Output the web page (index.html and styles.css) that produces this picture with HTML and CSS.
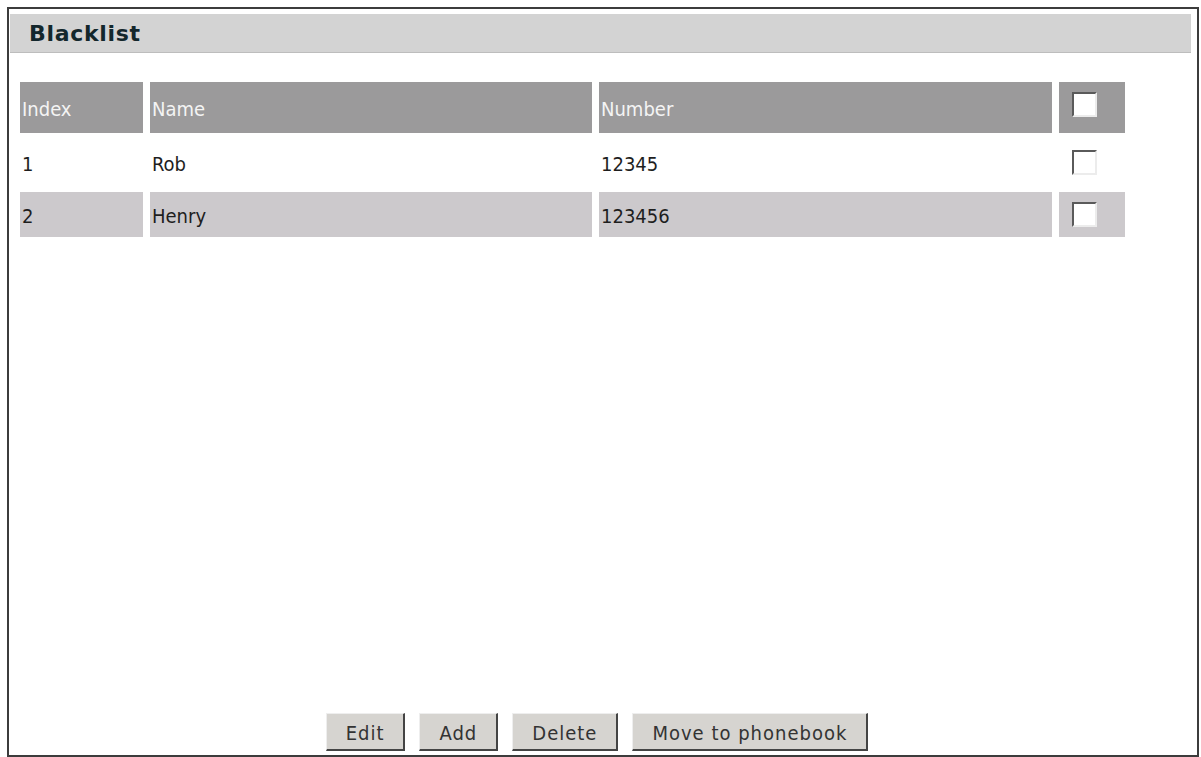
FILE: index.html
```html
<!DOCTYPE html>
<html lang="en">
<head>
<meta charset="utf-8">
<title>Blacklist</title>
<link rel="stylesheet" href="styles.css">
</head>
<body>
<div class="frame">
  <div class="titlebar"><span class="title">Blacklist</span></div>
  <div class="table">
    <div class="cell head">Index</div>
    <div class="cell head">Name</div>
    <div class="cell head">Number</div>
    <div class="cell head check"><input type="checkbox" class="box" aria-label="Select all"></div>

    <div class="cell">1</div>
    <div class="cell">Rob</div>
    <div class="cell">12345</div>
    <div class="cell check"><input type="checkbox" class="box" aria-label="Select Rob"></div>

    <div class="cell alt">2</div>
    <div class="cell alt">Henry</div>
    <div class="cell alt">123456</div>
    <div class="cell alt check"><input type="checkbox" class="box" aria-label="Select Henry"></div>
  </div>
  <div class="spacer"></div>
  <div class="buttons">
    <button class="btn">Edit</button>
    <button class="btn">Add</button>
    <button class="btn">Delete</button>
    <button class="btn">Move to phonebook</button>
  </div>
</div>
</body>
</html>
```

FILE: styles.css
```css
html, body {
  margin: 0;
  padding: 0;
  background: #ffffff;
}

body {
  padding: 7px 2px 0 7px;
  font-family: "DejaVu Sans Condensed", "DejaVu Sans", sans-serif;
  font-size: 20px;
  color: #1e1e1e;
}

.frame {
  box-sizing: border-box;
  height: 750px;
  border: 2px solid #3c3c3c;
  background: #ffffff;
  display: flex;
  flex-direction: column;
}

.titlebar {
  margin: 5px 6px 0 1px;
  height: 38px;
  background: #d3d3d3;
  border-bottom: 1px solid #bdbdbd;
  display: flex;
  align-items: center;
  padding-left: 19px;
}

.title {
  font-family: "DejaVu Sans", sans-serif;
  font-weight: bold;
  font-size: 22px;
  letter-spacing: 0.7px;
  color: #13272c;
  padding-top: 1px;
}

.table {
  margin: 29px 0 0 11px;
  display: grid;
  grid-template-columns: 123px 442px 453px 66px;
  grid-template-rows: 51px 45px 45px;
  gap: 7px;
}

.cell {
  display: flex;
  align-items: center;
  padding-left: 2px;
  padding-top: 3px;
  box-sizing: border-box;
}

.head {
  background: #9b9a9b;
  color: #f4f4f4;
}

.alt {
  background: #ccc9cc;
}

.check {
  padding-left: 13px;
  padding-top: 0;
}

.head.check {
  padding-bottom: 7px;
}

.box {
  appearance: none;
  -webkit-appearance: none;
  margin: 0;
  width: 25px;
  height: 25px;
  box-sizing: border-box;
  background: #ffffff;
  border-top: 2px solid #5a5a5a;
  border-left: 2px solid #5a5a5a;
  border-bottom: 2px solid #ececec;
  border-right: 2px solid #ececec;
}

.spacer {
  flex: 1;
}

.buttons {
  display: flex;
  justify-content: center;
  gap: 14px;
  padding-right: 12px;
  margin-bottom: 4px;
}

.btn {
  font-family: "DejaVu Sans Condensed", "DejaVu Sans", sans-serif;
  font-size: 20px;
  letter-spacing: 1px;
  color: #333333;
  background: #d6d4d0;
  height: 38px;
  padding: 2px 19px 0 19px;
  border-top: 1px solid #eeeeee;
  border-left: 1px solid #eeeeee;
  border-bottom: 2px solid #444444;
  border-right: 2px solid #444444;
  border-radius: 0;
}
```
